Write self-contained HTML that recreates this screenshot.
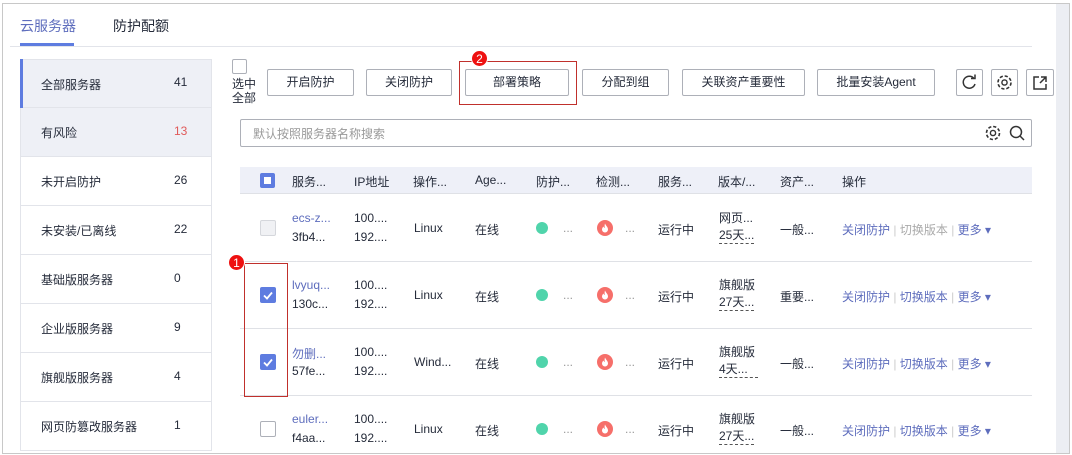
<!DOCTYPE html>
<html><head><meta charset="utf-8"><style>
*{box-sizing:border-box;margin:0;padding:0}
body{width:1072px;height:455px;overflow:hidden;background:#fff;font-family:"Liberation Sans","Noto Sans CJK SC",sans-serif;font-size:12px;color:#252b3a;position:relative}
.a{position:absolute}
.frame{left:2px;top:3px;width:1068px;height:451px;border:1px solid #c8c8c8}
.sb{left:1056px;top:4px;width:13px;height:449px;background:#eceef3}
.side div.it{position:absolute;left:20px;width:192px;height:49px;border:1px solid #e2e4ea;border-top:none;padding-left:20px;line-height:50px}
.side span{position:absolute;left:153px;top:-2px}
.btn{position:absolute;top:69px;height:27px;border:1px solid #adb0b8;border-radius:2px;text-align:center;line-height:25px;background:#fff}
.ib{position:absolute;top:69px;width:27px;height:27px;border:1px solid #adb0b8;border-radius:2px}
.th{position:absolute;top:167px;left:240px;width:792px;height:27px;background:#eef0f8;border-bottom:1px solid #dfe1e6}
.th span{position:absolute;top:6px;color:#252b3a}
.row{position:absolute;left:240px;width:792px;border-bottom:1px solid #dfe1e6}
.row span{position:absolute;white-space:nowrap}
.lk{color:#5e6dbd}
.cb{width:16px;height:16px;border:1px solid #adb0b8;border-radius:2px;background:#fff}
.cbc{width:16px;height:16px;border-radius:2px;background:#5e7ce0}
.dot{width:12px;height:12px;border-radius:50%;background:#50d4ab}
.dash{border-bottom:1px dashed #555}
.badge{width:17px;height:17px;border-radius:50%;background:#e11;color:#fff;font-size:12px;text-align:center;line-height:17px;border:1px solid #fff}
</style></head><body>
<div class="a frame"></div>
<div class="a sb"></div>
<div class="a" style="left:20px;top:16px;color:#5e6dbd;font-size:14px">云服务器</div>
<div class="a" style="left:20px;top:43px;width:54px;height:3px;background:#5e7ce0"></div>
<div class="a" style="left:113px;top:16px;font-size:14px">防护配额</div>
<div class="a" style="left:10px;top:46px;width:1022px;height:1px;background:#e2e4ea"></div>

<div class="side">
<div class="it" style="top:59px;border-top:1px solid #e2e4ea;background:#eef0f6">全部服务器<span style="top:-3px">41</span></div>
<div class="a" style="left:20px;top:59px;width:3px;height:49px;background:#5e7ce0"></div>
<div class="it" style="top:108px;background:#eef0f6">有风险<span style="color:#e05a5a">13</span></div>
<div class="it" style="top:157px">未开启防护<span>26</span></div>
<div class="it" style="top:206px">未安装/已离线<span>22</span></div>
<div class="it" style="top:255px">基础版服务器<span>0</span></div>
<div class="it" style="top:304px">企业版服务器<span>9</span></div>
<div class="it" style="top:353px">旗舰版服务器<span>4</span></div>
<div class="it" style="top:402px">网页防篡改服务器<span>1</span></div>
</div>

<div class="a cb" style="left:232px;top:59px;width:15px;height:15px"></div>
<div class="a" style="left:232px;top:77px;line-height:14px">选中<br>全部</div>
<div class="btn" style="left:267px;width:87px">开启防护</div>
<div class="btn" style="left:366px;width:86px">关闭防护</div>
<div class="btn" style="left:465px;width:104px">部署策略</div>
<div class="a" style="left:459px;top:61px;width:118px;height:44px;border:1px solid #c0302c"></div>
<div class="a badge" style="left:471px;top:50px">2</div>
<div class="btn" style="left:582px;width:87px">分配到组</div>
<div class="btn" style="left:682px;width:123px">关联资产重要性</div>
<div class="btn" style="left:817px;width:118px">批量安装Agent</div>
<div class="ib" style="left:956px"><svg width="25" height="25"><path d="M17 8.5A6 6 0 1 0 18 14" fill="none" stroke="#333" stroke-width="1.5"/><path d="M14 8.5h4v-4" fill="none" stroke="#333" stroke-width="1.5"/></svg></div>
<div class="ib" style="left:991px"><svg width="25" height="25"><circle cx="12.5" cy="12.5" r="6.5" fill="none" stroke="#333" stroke-width="1.6" stroke-dasharray="3.2 1.9"/><circle cx="12.5" cy="12.5" r="2.6" fill="none" stroke="#333" stroke-width="1.4"/></svg></div>
<div class="ib" style="left:1026px;width:28px"><svg width="26" height="25"><path d="M12 7H7v12h12v-5" fill="none" stroke="#333" stroke-width="1.5"/><path d="M14 7h5v5M19 7l-6 6" fill="none" stroke="#333" stroke-width="1.5"/></svg></div>

<div class="a" style="left:240px;top:119px;width:792px;height:28px;border:1px solid #adb0b8;border-radius:2px"></div>
<div class="a" style="left:253px;top:125px;color:#999">默认按照服务器名称搜索</div>
<svg class="a" style="left:984px;top:124px" width="44" height="18"><circle cx="9" cy="9" r="6.5" fill="none" stroke="#333" stroke-width="1.6" stroke-dasharray="3.2 1.9"/><circle cx="9" cy="9" r="2.6" fill="none" stroke="#333" stroke-width="1.4"/><circle cx="32" cy="8" r="5.5" fill="none" stroke="#333" stroke-width="1.5"/><path d="M36 12l4 4" stroke="#333" stroke-width="1.5"/></svg>

<div class="th">
<div class="a cbc" style="left:20px;top:6px;width:15px;height:15px"><div style="position:absolute;left:4px;top:4px;width:7px;height:7px;background:#fff"></div></div>
<span style="left:52px">服务...</span><span style="left:114px">IP地址</span><span style="left:173px">操作...</span><span style="left:235px">Age...</span><span style="left:296px">防护...</span><span style="left:356px">检测...</span><span style="left:418px">服务...</span><span style="left:478px">版本/...</span><span style="left:540px">资产...</span><span style="left:602px">操作</span>
</div>

<svg width="0" height="0" style="position:absolute"><defs>
<g id="fire"><circle cx="8" cy="8" r="8" fill="#f66f6a"/><path d="M8 3.5C9 6 11 7 11 9.5A3 3 0 0 1 5 9.5C5 8 6 7 6.5 6.5C6.8 7.5 7.3 8 7.8 8C7.5 6.5 7.5 5 8 3.5Z" fill="#fff"/></g>
<path id="chk" d="M4 8.5l3 3l5-6" fill="none" stroke="#fff" stroke-width="1.8"/>
</defs></svg>

<div class="row" style="top:195px;height:67px">
<div class="a cb" style="left:20px;top:25px;background:#f0f1f4;border-color:#d5d7dc"></div>
<span class="lk" style="left:52px;top:16px">ecs-z...</span><span style="left:52px;top:35px">3fb4...</span>
<span style="left:114px;top:16px">100....</span><span style="left:114px;top:35px">192....</span>
<span style="left:174px;top:26px">Linux</span><span style="left:235px;top:26px">在线</span>
<div class="a dot" style="left:296px;top:27px"></div><span style="left:323px;top:26px;color:#999">...</span>
<svg class="a" style="left:357px;top:25px" width="16" height="16"><use href="#fire"/></svg><span style="left:385px;top:26px;color:#999">...</span>
<span style="left:418px;top:26px">运行中</span>
<span style="left:479px;top:14px">网页...</span><span class="dash" style="left:479px;top:31px">25天...</span>
<span style="left:540px;top:26px">一般...</span>
<span style="left:602px;top:26px"><span class="lk" style="position:static">关闭防护</span> <span style="position:static;color:#ccc">|</span> <span style="position:static;color:#aaa">切换版本</span> <span style="position:static;color:#ccc">|</span> <span class="lk" style="position:static">更多 ▾</span></span>
</div>
<div class="row" style="top:262px;height:67px">
<svg class="a cbc" style="left:20px;top:25px" width="16" height="16"><use href="#chk"/></svg>
<span class="lk" style="left:52px;top:16px">lvyuq...</span><span style="left:52px;top:35px">130c...</span>
<span style="left:114px;top:16px">100....</span><span style="left:114px;top:35px">192....</span>
<span style="left:174px;top:26px">Linux</span><span style="left:235px;top:26px">在线</span>
<div class="a dot" style="left:296px;top:27px"></div><span style="left:323px;top:26px;color:#999">...</span>
<svg class="a" style="left:357px;top:25px" width="16" height="16"><use href="#fire"/></svg><span style="left:385px;top:26px;color:#999">...</span>
<span style="left:418px;top:26px">运行中</span>
<span style="left:479px;top:14px">旗舰版</span><span class="dash" style="left:479px;top:31px">27天...</span>
<span style="left:540px;top:26px">重要...</span>
<span class="lk" style="left:602px;top:26px">关闭防护 <span style="position:static;color:#ccc">|</span> 切换版本 <span style="position:static;color:#ccc">|</span> 更多 ▾</span>
</div>
<div class="row" style="top:329px;height:67px">
<svg class="a cbc" style="left:20px;top:25px" width="16" height="16"><use href="#chk"/></svg>
<span class="lk" style="left:52px;top:16px">勿删...</span><span style="left:52px;top:35px">57fe...</span>
<span style="left:114px;top:16px">100....</span><span style="left:114px;top:35px">192....</span>
<span style="left:174px;top:26px">Wind...</span><span style="left:235px;top:26px">在线</span>
<div class="a dot" style="left:296px;top:27px"></div><span style="left:323px;top:26px;color:#999">...</span>
<svg class="a" style="left:357px;top:25px" width="16" height="16"><use href="#fire"/></svg><span style="left:385px;top:26px;color:#999">...</span>
<span style="left:418px;top:26px">运行中</span>
<span style="left:479px;top:14px">旗舰版</span><span class="dash" style="left:479px;top:31px">4天...&nbsp;&nbsp;&nbsp;</span>
<span style="left:540px;top:26px">一般...</span>
<span class="lk" style="left:602px;top:26px">关闭防护 <span style="position:static;color:#ccc">|</span> 切换版本 <span style="position:static;color:#ccc">|</span> 更多 ▾</span>
</div>
<div class="row" style="top:396px;height:57px;border-bottom:none">
<div class="a cb" style="left:20px;top:25px"></div>
<span class="lk" style="left:52px;top:16px">euler...</span><span style="left:52px;top:35px">f4aa...</span>
<span style="left:114px;top:16px">100....</span><span style="left:114px;top:35px">192....</span>
<span style="left:174px;top:26px">Linux</span><span style="left:235px;top:26px">在线</span>
<div class="a dot" style="left:296px;top:27px"></div><span style="left:323px;top:26px;color:#999">...</span>
<svg class="a" style="left:357px;top:25px" width="16" height="16"><use href="#fire"/></svg><span style="left:385px;top:26px;color:#999">...</span>
<span style="left:418px;top:26px">运行中</span>
<span style="left:479px;top:14px">旗舰版</span><span class="dash" style="left:479px;top:31px">27天...</span>
<span style="left:540px;top:26px">一般...</span>
<span class="lk" style="left:602px;top:26px">关闭防护 <span style="position:static;color:#ccc">|</span> 切换版本 <span style="position:static;color:#ccc">|</span> 更多 ▾</span>
</div>
<div class="a" style="left:244px;top:263px;width:44px;height:134px;border:1px solid #c0302c"></div>
<div class="a badge" style="left:228px;top:254px">1</div>
</body></html>
